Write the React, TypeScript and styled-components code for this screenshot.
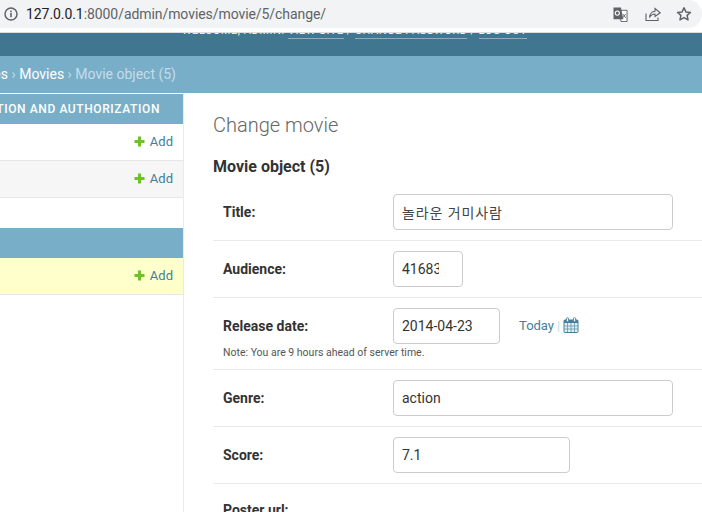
import * as React from 'react';
import styled, { createGlobalStyle } from 'styled-components';

const GlobalStyle = createGlobalStyle`
	html, body {
		margin: 0;
		padding: 0;
		background: #fff;
		overflow: hidden;
	}
	* {
		box-sizing: border-box;
	}
`;

const Page = styled.div`
	width: 702px;
	height: 512px;
	overflow: hidden;
	display: flex;
	flex-direction: column;
	font-family: Roboto, "Noto Sans CJK KR", sans-serif;
	color: #333;
`;

const Chrome = styled.div`
	height: 33px;
	flex: none;
	background: #fff;
	border-bottom: 1px solid #dadce0;
`;

const AddressBar = styled.div`
	height: 28px;
	background: #f1f3f4;
	border-radius: 0 14px 14px 0;
	display: flex;
	align-items: center;
	padding: 0 10px 0 3px;
`;

const UrlText = styled.div`
	flex: 1;
	margin-left: 7px;
	font-size: 14px;
	letter-spacing: -0.07px;
	color: #5f6368;
	white-space: nowrap;
`;

const UrlHost = styled.span`
	color: #202124;
`;

const ChromeIcons = styled.div`
	display: flex;
	align-items: center;
	gap: 15px;
`;

const TranslateGlyph = styled.svg`
	width: 15px;
	height: 15px;
	margin-right: 2px;
`;

const Header = styled.div`
	height: 23px;
	flex: none;
	background: #417690;
	display: flex;
	justify-content: flex-end;
	overflow: hidden;
	padding-right: 175px;
`;

const UserTools = styled.div`
	height: 6px;
	display: flex;
	align-items: flex-end;
	gap: 3px;
	font-size: 11px;
	letter-spacing: 0.55px;
	white-space: nowrap;
	text-transform: uppercase;
`;

const ToolText = styled.span<{ $link?: boolean }>`
	flex: none;
	line-height: 15px;
	color: ${props => props.$link ? '#fff' : '#ffc'};
	border-bottom: 1px solid ${props => props.$link ? 'rgba(255, 255, 255, 0.4)' : 'transparent'};
`;

const Breadcrumbs = styled.div`
	height: 37px;
	flex: none;
	background: #79aec8;
	display: flex;
	align-items: center;
	padding-bottom: 2px;
	font-size: 14px;
	color: #c4dce8;
`;

const BreadcrumbClip = styled.div`
	width: 176px;
	flex: none;
	overflow: hidden;
	display: flex;
	justify-content: flex-end;
	white-space: nowrap;
`;

const CrumbLink = styled.span`
	color: #fff;
`;

const Body = styled.div`
	flex: 1;
	display: flex;
	min-height: 0;
	padding-top: 1px;
`;

const Sidebar = styled.div`
	width: 184px;
	flex: none;
	border-right: 1px solid #eaeaea;
	margin-top: -1px;
	padding-top: 1px;
`;

const AppGroup = styled.div`
	margin-bottom: 30px;
`;

const Caption = styled.div`
	height: 30px;
	background: #79aec8;
	color: #fff;
	font-size: 12px;
	font-weight: 500;
	letter-spacing: 0.6px;
	text-transform: uppercase;
	display: flex;
	align-items: center;
	justify-content: flex-end;
	padding-right: 23px;
	overflow: hidden;
	white-space: nowrap;
`;

const ModelRow = styled.div<{ $tone: 'white' | 'grey' | 'yellow' }>`
	height: 37px;
	border-bottom: 1px solid #e6e6e6;
	background: ${props => ({ white: '#fff', grey: '#f6f6f6', yellow: '#ffc' })[props.$tone]};
	display: flex;
	align-items: center;
	justify-content: flex-end;
	gap: 5px;
	padding: 0 10px 2px 0;
	font-size: 13px;
	color: #447e9b;
`;

const Content = styled.div`
	flex: 1;
	min-width: 0;
	padding: 19px 0 0 29px;
`;

const Title = styled.h1`
	margin: 0;
	font-size: 20px;
	line-height: 24px;
	font-weight: 300;
	color: #666;
`;

const ObjectName = styled.h2`
	margin: 20px 0 0;
	font-size: 16px;
	line-height: 20px;
	font-weight: 700;
	color: #333;
`;

const FormRows = styled.div`
	margin-top: 7px;
`;

const FormRow = styled.div`
	border-bottom: 1px solid #eaeaea;
	padding: 10px 0;
`;

const Field = styled.div`
	display: flex;
	align-items: center;
	height: 36px;
`;

const Label = styled.div`
	width: 170px;
	margin-left: 10px;
	flex: none;
	font-size: 14px;
	font-weight: 700;
	color: #333;
`;

const TextInput = styled.div<{ $width: number }>`
	width: ${props => props.$width}px;
	height: 36px;
	flex: none;
	border: 1px solid #ccc;
	border-radius: 4px;
	padding: 0 8px;
	display: flex;
	align-items: center;
	font-size: 14px;
	color: #333;
	background: #fff;
	overflow: hidden;
	white-space: nowrap;
`;

const KoreanValue = styled.span`
	letter-spacing: 0.9px;
	color: #444;
`;

const NumberValue = styled.span`
	display: block;
	width: 37px;
	overflow: hidden;
`;

const DateShortcuts = styled.div`
	display: flex;
	align-items: center;
	margin: 0 0 2px 19px;
	font-size: 13px;
	color: #447e9b;
`;

const Pipe = styled.span`
	color: #c6dbe6;
	margin: 0 3px 0 3px;
`;

const Help = styled.div`
	margin: 2px 0 0 10px;
	font-size: 10.5px;
	line-height: 13px;
	color: #555;
`;

const PosterLabel = styled(Label)`
	margin-top: 18px;
`;

function PlusIcon() {
	return (
		<svg width="11" height="11" viewBox="0 0 11 11">
			<path d="M4 0.5h3v3.5h3.5v3H7v3.5H4V7H0.5V4H4z" fill="#70bf2b"/>
		</svg>
	);
}

function InfoIcon() {
	return (
		<svg width="16" height="16" viewBox="0 0 16 16" fill="none">
			<circle cx="8" cy="8" r="6" stroke="#5f6368" strokeWidth="1.5"/>
			<rect x="7.2" y="7" width="1.6" height="4.2" fill="#5f6368"/>
			<rect x="7.2" y="4.6" width="1.6" height="1.6" fill="#5f6368"/>
		</svg>
	);
}

function TranslateIcon() {
	return (
		<TranslateGlyph viewBox="0 0 16 16">
			<path d="M7 3.5h8v12H8.5z" fill="#fff" stroke="#5f6368"/>
			<path d="M0.5 0.5H8.5L11 13H0.5z" fill="#5f6368"/>
			<circle cx="4.6" cy="6.5" r="2.2" fill="none" stroke="#fff" strokeWidth="1.1"/>
			<path d="M10.5 7.5l3 4M13.5 7.5l-3 4" stroke="#5f6368" fill="none"/>
		</TranslateGlyph>
	);
}

function ShareIcon() {
	return (
		<svg width="16" height="16" viewBox="0 0 16 16" fill="none" stroke="#5f6368" strokeWidth="1.1">
			<path d="M1 7.5V14.5H13V11.5"/>
			<path d="M4.5 11.5C5 7.5 7.5 5.5 10 5.3V2.5L15.2 6.8L10 10.5V8C8 8 6 9 4.5 11.5z"/>
		</svg>
	);
}

function StarIcon() {
	return (
		<svg width="16" height="16" viewBox="0 0 16 16" fill="none" stroke="#5f6368" strokeWidth="1.5" strokeLinejoin="round">
			<path d="M8 1.8l1.9 4.1 4.5.5-3.3 3 .9 4.5L8 11.6l-4 2.3.9-4.5-3.3-3 4.5-.5z"/>
		</svg>
	);
}

function CalendarIcon() {
	return (
		<svg width="16" height="16" viewBox="0 0 16 16">
			<rect x="1" y="3" width="14" height="12.5" rx="1" fill="#e4eef3" stroke="#447e9b"/>
			<rect x="1" y="3" width="14" height="3" fill="#447e9b"/>
			<path d="M4.5 6v9M8 6v9M11.5 6v9M1 9h14M1 12h14" stroke="#6f9db4" strokeWidth="0.9"/>
			<rect x="3.4" y="0.7" width="2.2" height="4" rx="1" fill="#fff" stroke="#447e9b" strokeWidth="0.9"/>
			<rect x="10.4" y="0.7" width="2.2" height="4" rx="1" fill="#fff" stroke="#447e9b" strokeWidth="0.9"/>
		</svg>
	);
}

function AddLink() {
	return (
		<>
			<PlusIcon/>
			<span>Add</span>
		</>
	);
}

export default function App() {
	return (
		<Page>
			<GlobalStyle/>
			<Chrome>
				<AddressBar>
					<InfoIcon/>
					<UrlText><UrlHost>127.0.0.1</UrlHost>:8000/admin/movies/movie/5/change/</UrlText>
					<ChromeIcons>
						<TranslateIcon/>
						<ShareIcon/>
						<StarIcon/>
					</ChromeIcons>
				</AddressBar>
			</Chrome>
			<Header>
				<UserTools>
					<ToolText>Welcome, admin.</ToolText>
					<ToolText $link>View site</ToolText>
					<ToolText>/</ToolText>
					<ToolText $link>Change password</ToolText>
					<ToolText>/</ToolText>
					<ToolText $link>Log out</ToolText>
				</UserTools>
			</Header>
			<Breadcrumbs>
				<BreadcrumbClip>
					<span>
						<CrumbLink>Movies</CrumbLink> › <CrumbLink>Movies</CrumbLink> › Movie object (5)
					</span>
				</BreadcrumbClip>
			</Breadcrumbs>
			<Body>
				<Sidebar>
					<AppGroup>
						<Caption>Authentication and Authorization</Caption>
						<ModelRow $tone="white"><AddLink/></ModelRow>
						<ModelRow $tone="grey"><AddLink/></ModelRow>
					</AppGroup>
					<AppGroup>
						<Caption/>
						<ModelRow $tone="yellow"><AddLink/></ModelRow>
					</AppGroup>
				</Sidebar>
				<Content>
					<Title>Change movie</Title>
					<ObjectName>Movie object (5)</ObjectName>
					<FormRows>
						<FormRow>
							<Field>
								<Label>Title:</Label>
								<TextInput $width={280}><KoreanValue>놀라운 거미사람</KoreanValue></TextInput>
							</Field>
						</FormRow>
						<FormRow>
							<Field>
								<Label>Audience:</Label>
								<TextInput $width={70}><NumberValue>41683</NumberValue></TextInput>
							</Field>
						</FormRow>
						<FormRow>
							<Field>
								<Label>Release date:</Label>
								<TextInput $width={107}>2014-04-23</TextInput>
								<DateShortcuts>
									<span>Today</span>
									<Pipe>|</Pipe>
									<CalendarIcon/>
								</DateShortcuts>
							</Field>
							<Help>Note: You are 9 hours ahead of server time.</Help>
						</FormRow>
						<FormRow>
							<Field>
								<Label>Genre:</Label>
								<TextInput $width={280}>action</TextInput>
							</Field>
						</FormRow>
						<FormRow>
							<Field>
								<Label>Score:</Label>
								<TextInput $width={177}>7.1</TextInput>
							</Field>
						</FormRow>
						<PosterLabel>Poster url:</PosterLabel>
					</FormRows>
				</Content>
			</Body>
		</Page>
	);
}
